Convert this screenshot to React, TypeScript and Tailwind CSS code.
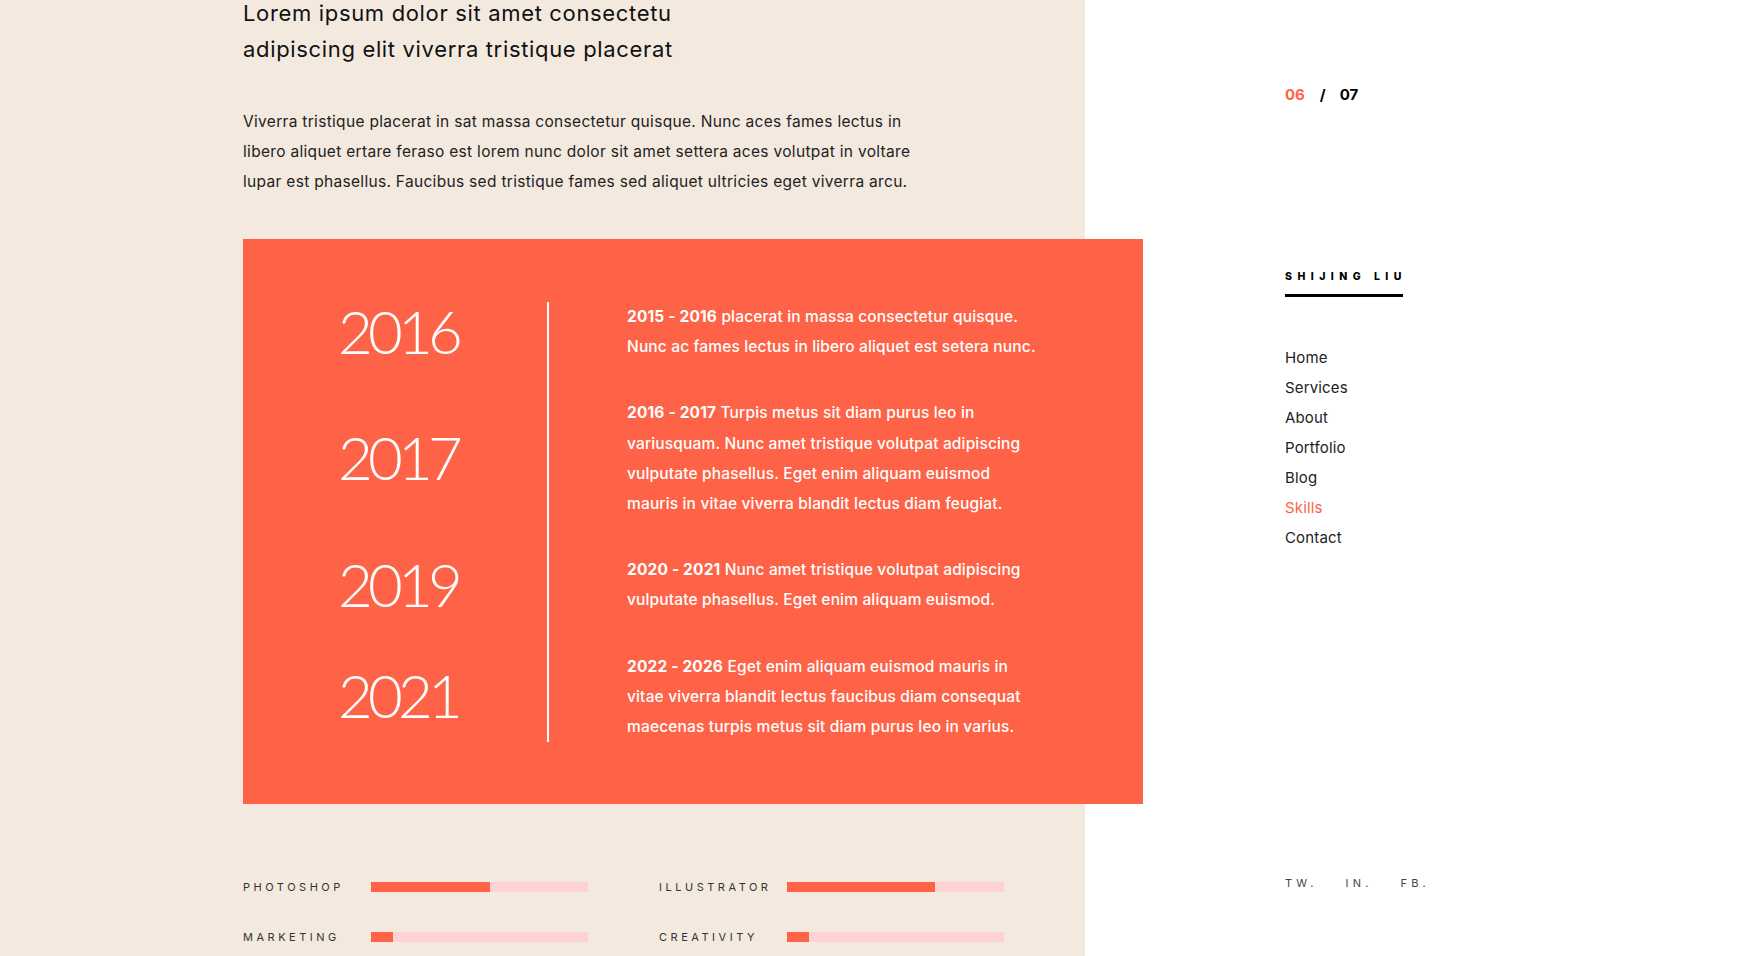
import React from 'react';

const TIMELINE = [
  {
    year: '2016',
    range: '2015 - 2016',
    text: 'placerat in massa consectetur quisque. Nunc ac fames lectus in libero aliquet est setera nunc.',
  },
  {
    year: '2017',
    range: '2016 - 2017',
    text: 'Turpis metus sit diam purus leo in variusquam. Nunc amet tristique volutpat adipiscing vulputate phasellus. Eget enim aliquam euismod mauris in vitae viverra blandit lectus diam feugiat.',
  },
  {
    year: '2019',
    range: '2020 - 2021',
    text: 'Nunc amet tristique volutpat adipiscing vulputate phasellus. Eget enim aliquam euismod.',
  },
  {
    year: '2021',
    range: '2022 - 2026',
    text: 'Eget enim aliquam euismod mauris in vitae viverra blandit lectus faucibus diam consequat maecenas turpis metus sit diam purus leo in varius.',
  },
];

const SKILLS = [
  { name: 'Photoshop', value: 55 },
  { name: 'Illustrator', value: 68 },
  { name: 'Marketing', value: 10 },
  { name: 'Creativity', value: 10 },
];

const NAV = ['Home', 'Services', 'About', 'Portfolio', 'Blog', 'Skills', 'Contact'];

const SkillBar = ({ name, value }: { name: string; value: number }) => (
  <div className="flex items-center h-[20px]">
    <span className="w-[128px] shrink-0 text-[11px] uppercase tracking-[0.32em] text-[#333]">
      {name}
    </span>
    <div className="w-[217px] h-[10px] bg-[#ffd3d3]">
      <div className="h-full bg-[#ff6347]" style={{ width: `${value}%` }} />
    </div>
  </div>
);

export default function App() {
  return (
    <div className="flex h-[956px] w-[1760px] overflow-hidden bg-white font-['Inter',sans-serif] text-[#1a1a1a]">
      {/* Main column */}
      <main className="w-[1085px] shrink-0 bg-[#f4e9de] pl-[243px]">
        <h2 className="-mt-[5px] max-w-[480px] text-[22px] leading-[36px] font-normal tracking-[0.03em] text-[#111]">
          Lorem ipsum dolor sit amet consectetu adipiscing elit viverra tristique placerat
        </h2>
        <p className="mt-[40px] max-w-[680px] text-[15.5px] leading-[30px] tracking-[0.02em] text-[#222]">
          Viverra tristique placerat in sat massa consectetur quisque. Nunc aces fames lectus in libero aliquet ertare
          feraso est lorem nunc dolor sit amet settera aces volutpat in voltare lupar est phasellus. Faucibus sed
          tristique fames sed aliquet ultricies eget viverra arcu.
        </p>

        {/* Timeline card */}
        <section className="relative z-10 mt-[42px] w-[900px] bg-[#ff6347] pt-[63px] pb-[62px] text-white">
          <div className="grid grid-cols-[304px_1fr]">
            {TIMELINE.map((item, i) => (
              <React.Fragment key={item.year}>
                <div
                  className={`flex items-center pl-[95px] ${i < TIMELINE.length - 1 ? 'pb-[36px]' : ''}`}
                >
                  <span className="-mt-[3px] font-['Lato',sans-serif] text-[60px] font-light leading-none tracking-[-0.08em]">
                    {item.year}
                  </span>
                </div>
                <div
                  className={`border-l-2 border-white pl-[78px] ${i < TIMELINE.length - 1 ? 'pb-[36px]' : ''}`}
                >
                  <p className="max-w-[412px] text-[15.5px] leading-[30.2px] tracking-[0.01em] font-medium">
                    <span className="font-bold">{item.range}</span> {item.text}
                  </p>
                </div>
              </React.Fragment>
            ))}
          </div>
        </section>

        {/* Skills */}
        <div className="mt-[73px] grid grid-cols-[416px_1fr] gap-y-[30px]">
          {SKILLS.map((s) => (
            <SkillBar key={s.name} name={s.name} value={s.value} />
          ))}
        </div>
      </main>

      {/* Sidebar */}
      <aside className="flex flex-col pl-[200px] pt-[85px]">
        <div className="flex items-center text-[15px] leading-[20px] font-bold">
          <span className="text-[#ff6347]">06</span>
          <span className="ml-[15px] text-black">/</span>
          <span className="ml-[14px] text-black">07</span>
        </div>

        <div className="mt-[164px] w-[118px] border-b-[3px] border-black pb-[9px]">
          <span className="block text-[10.5px] leading-[16px] font-extrabold tracking-[0.52em] text-black whitespace-nowrap">
            SHIJING LIU
          </span>
        </div>

        <nav className="mt-[46px] flex flex-col">
          {NAV.map((item) => (
            <a
              key={item}
              href="#"
              className={`text-[15px] leading-[30px] tracking-[0.01em] ${item === 'Skills' ? 'text-[#ff6347]' : 'text-[#222]'}`}
            >
              {item}
            </a>
          ))}
        </nav>

        <div className="mt-[322px] flex gap-[28px] text-[11px] leading-[16px] tracking-[0.38em] text-[#444]">
          <a href="#">TW.</a>
          <a href="#">IN.</a>
          <a href="#">FB.</a>
        </div>
      </aside>
    </div>
  );
}
